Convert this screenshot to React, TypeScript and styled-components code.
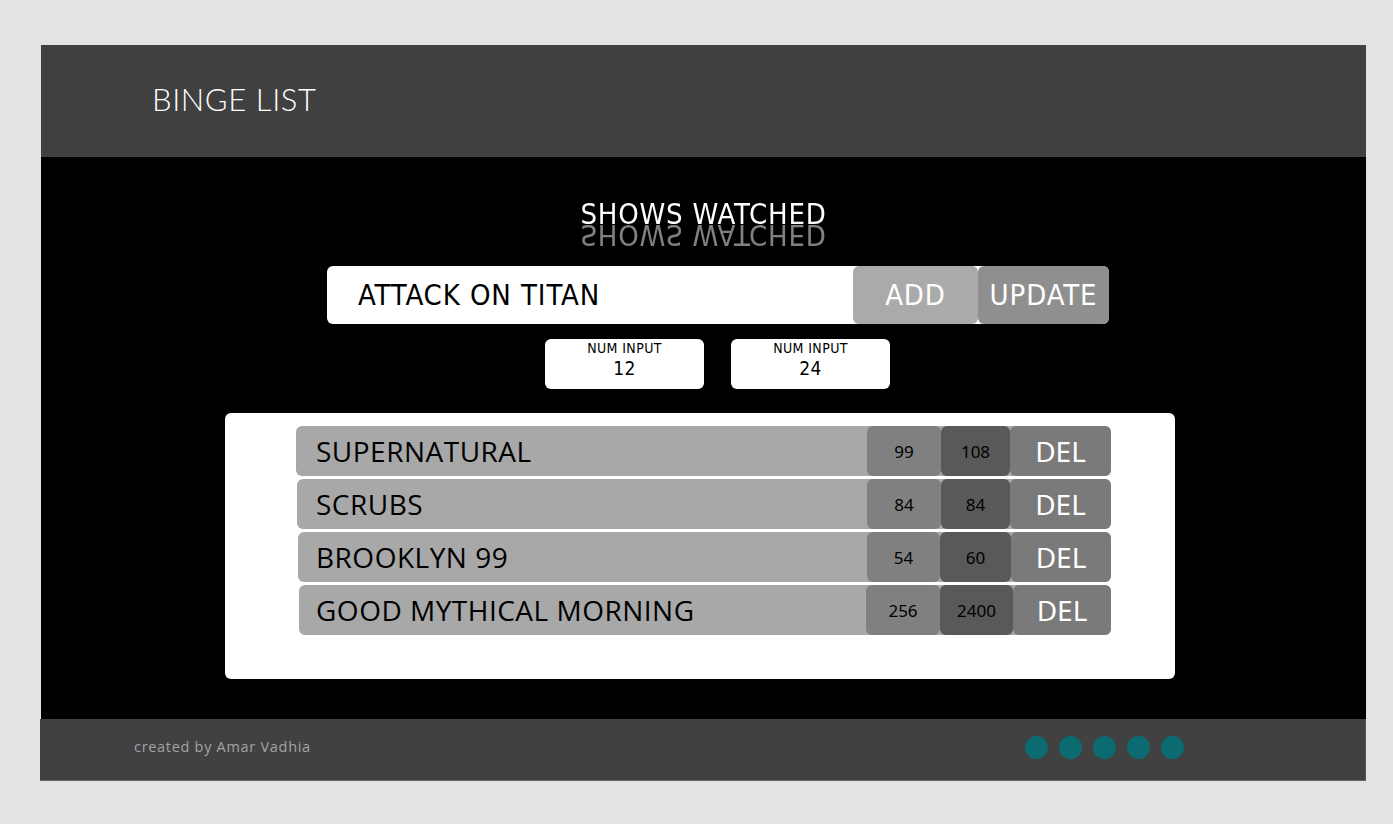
import React from "react";
import styled, { createGlobalStyle } from "styled-components";

const Global = createGlobalStyle`
  html, body { margin: 0; padding: 0; background: #e3e3e3; }
  body { font-family: "Noto Sans", sans-serif; }
`;

const condensed = `"DejaVu Sans Condensed", "Liberation Sans Narrow", Roboto, sans-serif`;

const Frame = styled.div`
  margin: 45px 0 0 41px;
  width: 1325px;
  display: flex;
  flex-direction: column;
`;

const Header = styled.header`
  height: 112px;
  box-sizing: border-box;
  background: #404040;
  display: flex;
  align-items: center;
  padding: 0 0 5px 111px;
`;

const Brand = styled.h1`
  margin: 0;
  font-family: "Lato", sans-serif;
  font-weight: 300;
  font-size: 31px;
  letter-spacing: 0.6px;
  color: #ffffff;
`;

const Main = styled.main`
  height: 562px;
  background: #000;
  display: flex;
  flex-direction: column;
`;

const Title = styled.h2`
  margin: 43px 0 0 0;
  align-self: center;
  font-family: ${condensed};
  font-weight: 400;
  font-size: 29px;
  letter-spacing: 0.8px;
  line-height: 29px;
  height: 29px;
  color: #fff;
  -webkit-box-reflect: below -9px linear-gradient(rgba(255, 255, 255, 0.5), rgba(255, 255, 255, 0.5));
`;

const InputBar = styled.div`
  margin: 37px 0 0 286px;
  width: 782px;
  height: 58px;
  background: #fff;
  border-radius: 6px;
  display: flex;
  align-items: stretch;
  overflow: hidden;
`;

const ShowName = styled.div`
  flex: 1;
  display: flex;
  align-items: center;
  padding-left: 31px;
  font-family: ${condensed};
  font-size: 29px;
  letter-spacing: 0.9px;
  color: #000;
`;

const BarButton = styled.div<{ $bg: string; $w: number }>`
  width: ${(p) => p.$w}px;
  background: ${(p) => p.$bg};
  border-radius: 6px;
  display: flex;
  align-items: center;
  justify-content: center;
  font-family: ${condensed};
  font-size: 29px;
  letter-spacing: 0.9px;
  color: #fff;
`;

const NumRow = styled.div`
  margin: 15px 0 0 504px;
  display: flex;
  gap: 27px;
`;

const NumBox = styled.div`
  width: 159px;
  height: 50px;
  box-sizing: border-box;
  padding-top: 2px;
  background: #fff;
  border-radius: 6px;
  display: flex;
  flex-direction: column;
  align-items: center;
  font-family: ${condensed};
  color: #000;
`;

const NumLabel = styled.span`
  font-size: 14px;
  letter-spacing: 0.4px;
  line-height: 14px;
`;

const NumValue = styled.span`
  margin-top: 3px;
  font-size: 19px;
  letter-spacing: 0.5px;
  line-height: 20px;
`;

const Panel = styled.section`
  margin: 24px 0 0 184px;
  width: 950px;
  height: 266px;
  box-sizing: border-box;
  background: #fff;
  border-radius: 6px;
  padding: 13px 0 0 71px;
  display: flex;
  flex-direction: column;
  gap: 3px;
`;

const Row = styled.div<{ $shift: number }>`
  margin-left: ${(p) => p.$shift}px;
  width: ${(p) => 815 - p.$shift}px;
  height: 50px;
  background: #a8a8a8;
  border-radius: 6px;
  display: flex;
  align-items: stretch;
`;

const RowName = styled.div<{ $shift: number }>`
  flex: 1;
  display: flex;
  align-items: center;
  padding-left: ${(p) => 20 - p.$shift}px;
  font-family: "Open Sans", "Noto Sans", sans-serif;
  font-size: 28px;
  letter-spacing: 0.5px;
  color: #000;
`;

const Cell = styled.div<{ $bg: string; $w: number }>`
  width: ${(p) => p.$w}px;
  background: ${(p) => p.$bg};
  border-radius: 6px;
  display: flex;
  align-items: center;
  justify-content: center;
  font-family: "Noto Sans", sans-serif;
  font-size: 17px;
  color: #000;
`;

const DelButton = styled.div<{ $w: number }>`
  width: ${(p) => p.$w}px;
  background: #7a7a7a;
  border-radius: 6px;
  display: flex;
  align-items: center;
  justify-content: center;
  font-family: "Noto Sans", sans-serif;
  font-size: 28px;
  color: #fff;
`;

const Footer = styled.footer`
  margin-left: -1px;
  height: 62px;
  box-sizing: border-box;
  background: #414141;
  border-right: 1px solid #555;
  border-bottom: 1px solid #6a6a6a;
  display: flex;
  align-items: center;
  padding: 0 0 4px 94px;
`;

const Credit = styled.span`
  font-family: "Open Sans", sans-serif;
  font-size: 14.5px;
  letter-spacing: 0.7px;
  color: #a3a3a3;
  width: 891px;
  margin-top: -3px;
`;

const Dots = styled.div`
  display: flex;
  gap: 11px;
`;

const Dot = styled.span`
  width: 23px;
  height: 23px;
  border-radius: 50%;
  background: #0b6b71;
`;

const shows = [
  { name: "SUPERNATURAL", a: "99", b: "108", shift: 0, w1: 74, w2: 69, w3: 101 },
  { name: "SCRUBS", a: "84", b: "84", shift: 1, w1: 74, w2: 69, w3: 101 },
  { name: "BROOKLYN 99", a: "54", b: "60", shift: 2, w1: 73, w2: 71, w3: 100 },
  { name: "GOOD MYTHICAL MORNING", a: "256", b: "2400", shift: 3, w1: 74, w2: 73, w3: 98 },
];

export default function App() {
  return (
    <>
      <Global />
      <Frame>
        <Header>
          <Brand>BINGE LIST</Brand>
        </Header>
        <Main>
          <Title>SHOWS WATCHED</Title>
          <InputBar>
            <ShowName>ATTACK ON TITAN</ShowName>
            <BarButton $bg="#aaaaaa" $w={125}>ADD</BarButton>
            <BarButton $bg="#8f8f8f" $w={131}>UPDATE</BarButton>
          </InputBar>
          <NumRow>
            <NumBox>
              <NumLabel>NUM INPUT</NumLabel>
              <NumValue>12</NumValue>
            </NumBox>
            <NumBox>
              <NumLabel>NUM INPUT</NumLabel>
              <NumValue>24</NumValue>
            </NumBox>
          </NumRow>
          <Panel>
            {shows.map((s) => (
              <Row key={s.name} $shift={s.shift}>
                <RowName $shift={s.shift}>{s.name}</RowName>
                <Cell $bg="#808080" $w={s.w1}>{s.a}</Cell>
                <Cell $bg="#595959" $w={s.w2}>{s.b}</Cell>
                <DelButton $w={s.w3}>DEL</DelButton>
              </Row>
            ))}
          </Panel>
        </Main>
        <Footer>
          <Credit>created by Amar Vadhia</Credit>
          <Dots>
            <Dot />
            <Dot />
            <Dot />
            <Dot />
            <Dot />
          </Dots>
        </Footer>
      </Frame>
    </>
  );
}
